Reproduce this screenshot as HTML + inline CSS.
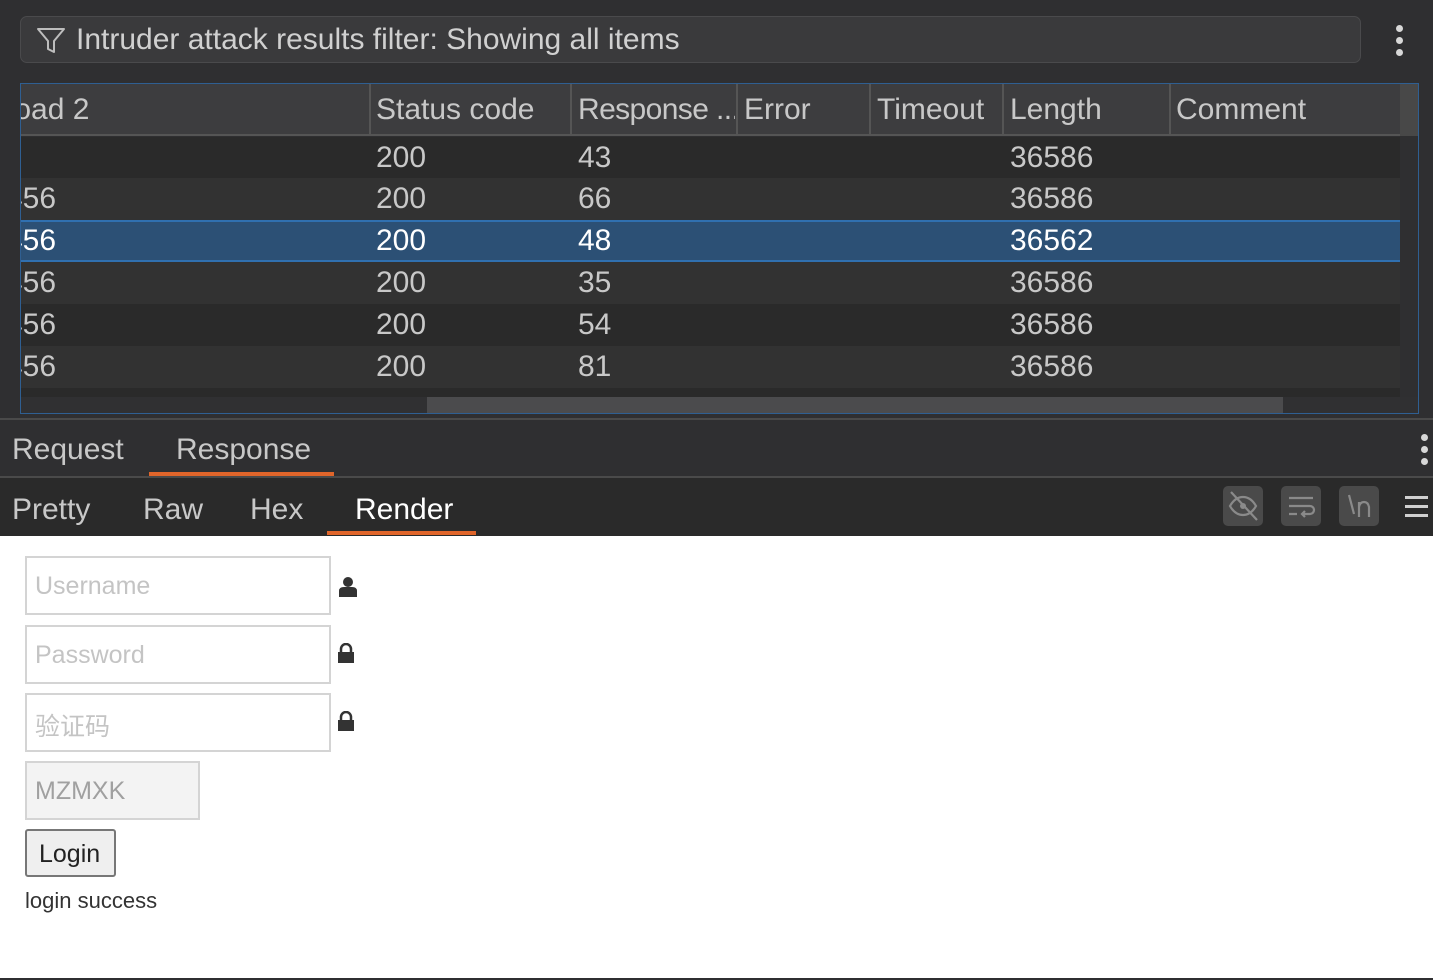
<!DOCTYPE html>
<html><head><meta charset="utf-8"><style>
*{margin:0;padding:0;box-sizing:border-box}
body{width:1433px;height:980px;overflow:hidden;background:#2f2f31;font-family:"Liberation Sans","Noto Sans CJK SC",sans-serif;position:relative;color:#c8c8c8}
.a{position:absolute}
.t{font-size:30px;white-space:nowrap}
.row{position:absolute;left:21px;width:1379px;height:42px}
.c{position:absolute;top:4px;font-size:30px;white-space:nowrap;color:#c8c8c8}
.dots i{display:block;width:7px;height:7px;border-radius:50%;background:#d8d8d8;margin-bottom:5px}
.btn{position:absolute;top:486px;width:40px;height:40px;background:#4a4a4a;border-radius:5px}
.inp{position:absolute;left:25px;width:306px;height:59px;border:2px solid #d4d4d4;background:#fff;font-size:25px;color:#c4c4c4;padding:14px 0 0 8px}
</style></head><body>
<div class="a" style="left:20px;top:16px;width:1341px;height:47px;background:#3a3a3c;border:1px solid #4a4a4c;border-radius:7px"></div>
<svg class="a" style="left:36px;top:27px" width="30" height="28" viewBox="0 0 30 28"><path d="M2 2H28L18 14V25L12 22V14Z" fill="none" stroke="#bdbdbd" stroke-width="2" stroke-linejoin="round"/></svg>
<div class="a t" style="left:76px;top:23px;color:#d0d0d0">Intruder attack results filter: Showing all items</div>
<div class="a dots" style="left:1396px;top:25px"><i></i><i></i><i></i></div>
<div class="a" style="left:20px;top:83px;width:1399px;height:331px;border:1px solid #2f5f92;background:#2f2f31"></div>
<div class="a" style="left:21px;top:84px;width:1379px;height:52px;background:#3d3d3f;border-bottom:2px solid #555"></div>
<div class="a" style="left:1400px;top:84px;width:18px;height:52px;background:#484848"></div>
<div class="a" style="left:21px;top:84px;width:1379px;height:52px;overflow:hidden">
 <div class="c" style="left:-65px;top:9px">Payload 2</div>
 <div class="c" style="left:355px;top:9px">Status code</div>
 <div class="c" style="left:557px;top:9px;letter-spacing:-0.6px;width:157px;overflow:hidden">Response ...</div>
 <div class="c" style="left:723px;top:9px">Error</div>
 <div class="c" style="left:856px;top:9px">Timeout</div>
 <div class="c" style="left:989px;top:9px">Length</div>
 <div class="c" style="left:1155px;top:9px">Comment</div>
 <div class="a" style="left:348px;top:0;width:2px;height:52px;background:#555"></div>
 <div class="a" style="left:549px;top:0;width:2px;height:52px;background:#555"></div>
 <div class="a" style="left:715px;top:0;width:2px;height:52px;background:#555"></div>
 <div class="a" style="left:848px;top:0;width:2px;height:52px;background:#555"></div>
 <div class="a" style="left:981px;top:0;width:2px;height:52px;background:#555"></div>
 <div class="a" style="left:1148px;top:0;width:2px;height:52px;background:#555"></div>
</div>
<div class="a" style="left:21px;top:137px;width:1379px;height:260px;overflow:hidden">
 <div class="row" style="left:0;top:0;background:#2a2a2a"><div class="c" style="left:355px">200</div><div class="c" style="left:557px">43</div><div class="c" style="left:989px">36586</div></div>
 <div class="row" style="left:0;top:41px;background:#323232"><div class="c" style="left:-15px">456</div><div class="c" style="left:355px">200</div><div class="c" style="left:557px">66</div><div class="c" style="left:989px">36586</div></div>
 <div class="row" style="left:0;top:83px;background:#2c5075;border-top:2px solid #3070b0;border-bottom:2px solid #3070b0"><div class="c" style="left:-15px;top:2px;color:#fff">456</div><div class="c" style="left:355px;top:2px;color:#fff">200</div><div class="c" style="left:557px;top:2px;color:#fff">48</div><div class="c" style="left:989px;top:2px;color:#fff">36562</div></div>
 <div class="row" style="left:0;top:125px;background:#323232"><div class="c" style="left:-15px">456</div><div class="c" style="left:355px">200</div><div class="c" style="left:557px">35</div><div class="c" style="left:989px">36586</div></div>
 <div class="row" style="left:0;top:167px;background:#2a2a2a"><div class="c" style="left:-15px">456</div><div class="c" style="left:355px">200</div><div class="c" style="left:557px">54</div><div class="c" style="left:989px">36586</div></div>
 <div class="row" style="left:0;top:209px;background:#323232"><div class="c" style="left:-15px">456</div><div class="c" style="left:355px">200</div><div class="c" style="left:557px">81</div><div class="c" style="left:989px">36586</div></div>
 <div class="row" style="left:0;top:251px;height:9px;background:#2a2a2a"></div>
</div>
<div class="a" style="left:21px;top:397px;width:1397px;height:16px;background:#303032"></div>
<div class="a" style="left:427px;top:397px;width:856px;height:16px;background:#4b4b4d"></div>
<div class="a" style="left:0;top:418px;width:1433px;height:2px;background:#4a4a4a"></div>
<div class="a" style="left:0;top:420px;width:1433px;height:56px;background:#2f2f31"></div>
<div class="a t" style="left:12px;top:433px;color:#c8c8c8">Request</div>
<div class="a t" style="left:176px;top:433px;color:#c8c8c8">Response</div>
<div class="a" style="left:149px;top:472px;width:185px;height:4px;background:#e0652a"></div>
<div class="a dots" style="left:1421px;top:434px"><i></i><i></i><i></i></div>
<div class="a" style="left:0;top:476px;width:1433px;height:2px;background:#4a4a4a"></div>
<div class="a" style="left:0;top:478px;width:1433px;height:58px;background:#2a2a2a"></div>
<div class="a t" style="left:12px;top:493px">Pretty</div>
<div class="a t" style="left:143px;top:493px">Raw</div>
<div class="a t" style="left:250px;top:493px">Hex</div>
<div class="a t" style="left:355px;top:493px;color:#fff">Render</div>
<div class="a" style="left:327px;top:531px;width:149px;height:4px;background:#e0652a"></div>
<div class="btn" style="left:1223px"><svg width="40" height="40" viewBox="0 0 40 40"><path d="M7 20C11 13 16 11 20 11S29 13 33 20C29 27 24 29 20 29S11 27 7 20Z" fill="none" stroke="#8a8a8a" stroke-width="2.2"/><circle cx="20" cy="20" r="3" fill="#8a8a8a"/><path d="M8 6L34 34" stroke="#8a8a8a" stroke-width="2.2"/></svg></div>
<div class="btn" style="left:1281px"><svg width="40" height="40" viewBox="0 0 40 40"><path d="M8 12H32M8 20H29A4 4 0 0 1 29 28H21M24 25L21 28L24 31M8 28H16" fill="none" stroke="#8a8a8a" stroke-width="2.2"/></svg></div>
<div class="btn" style="left:1339px"><svg width="40" height="40" viewBox="0 0 40 40"><path d="M10 9L15 28M20 16V31M20 21Q21 16 25 16T30 21V31" fill="none" stroke="#8a8a8a" stroke-width="2.2"/></svg></div>
<div class="a" style="left:1405px;top:496px;width:23px;height:3px;background:#d0d0d0"></div>
<div class="a" style="left:1405px;top:505px;width:23px;height:3px;background:#d0d0d0"></div>
<div class="a" style="left:1405px;top:514px;width:23px;height:3px;background:#d0d0d0"></div>
<div class="a" style="left:0;top:536px;width:1433px;height:442px;background:#fff"></div>
<div class="a" style="left:0;top:978px;width:1433px;height:2px;background:#2f2f31"></div>
<div class="inp" style="top:556px">Username</div>
<div class="inp" style="top:625px">Password</div>
<div class="inp" style="top:693px;padding-top:12px">验证码</div>
<div class="inp" style="top:761px;width:175px;background:#f3f3f3;color:#a0a0a0">MZMXK</div>
<div class="a" style="left:25px;top:829px;width:91px;height:48px;border:2px solid #777;border-radius:3px;background:#efefef;font-size:25px;color:#222;padding:9px 0 0 12px">Login</div>
<div class="a" style="left:25px;top:888px;font-size:22px;color:#333">login success</div>
<svg class="a" style="left:338px;top:576px" width="20" height="22" viewBox="0 0 20 22"><circle cx="10" cy="6" r="5" fill="#333"/><path d="M1 21V15Q1 11 6 11H14Q19 11 19 15V21Z" fill="#333"/></svg>
<svg class="a" style="left:337px;top:643px" width="18" height="20" viewBox="0 0 18 20"><path d="M4 9V6A5 5 0 0 1 14 6V9" fill="none" stroke="#333" stroke-width="2.5"/><rect x="1" y="9" width="16" height="11" fill="#333"/></svg>
<svg class="a" style="left:337px;top:711px" width="18" height="20" viewBox="0 0 18 20"><path d="M4 9V6A5 5 0 0 1 14 6V9" fill="none" stroke="#333" stroke-width="2.5"/><rect x="1" y="9" width="16" height="11" fill="#333"/></svg>
</body></html>
